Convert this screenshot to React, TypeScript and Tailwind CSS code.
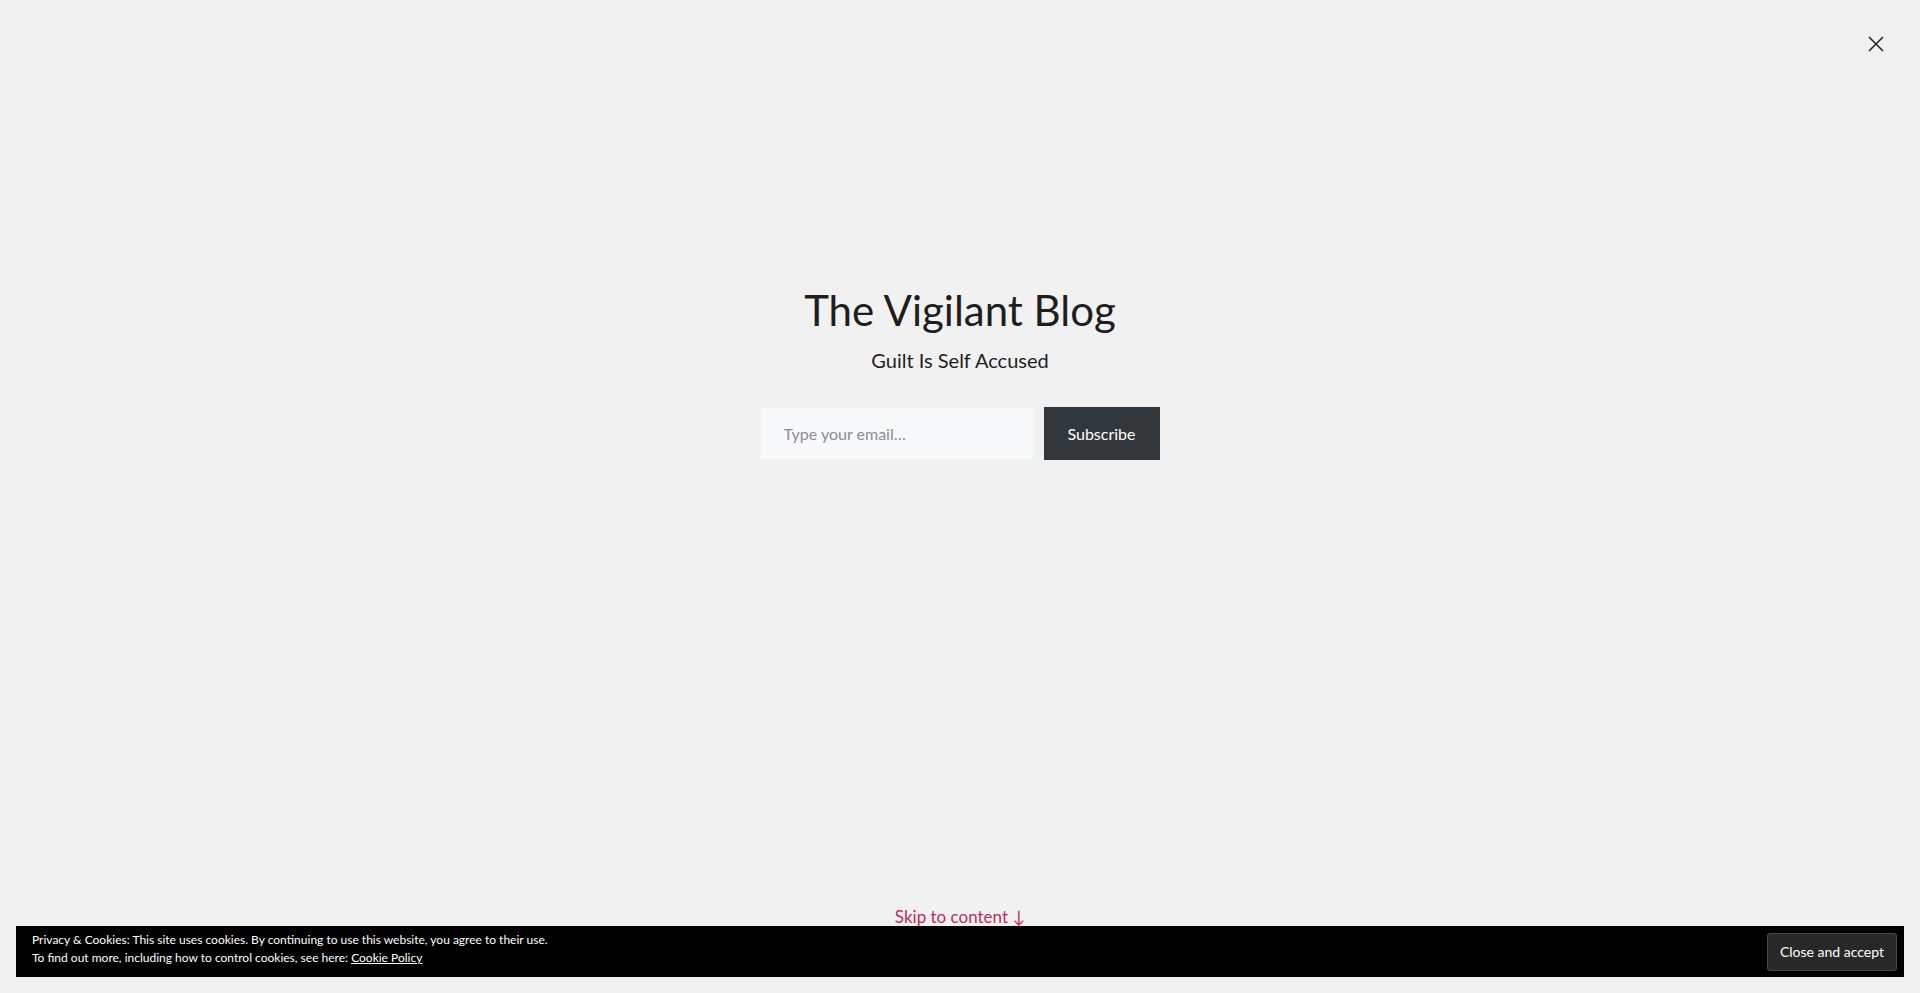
export default function App() {
  return (
    <div className="relative flex h-[993px] w-full flex-col items-center overflow-hidden bg-[#f1f1f1] font-['Lato',sans-serif] text-[#1e1e1e]">
      {/* close overlay */}
      <button className="absolute right-[36px] top-[36px] text-[#222]" aria-label="Close">
        <svg width="16" height="16" viewBox="0 0 16 16" fill="none" stroke="currentColor" strokeWidth="1.5">
          <path d="M1 1L15 15M15 1L1 15" />
        </svg>
      </button>

      <div className="flex flex-col items-center pt-[285px]">
        <h1 className="text-[42px] font-normal leading-[1.2] text-[#1e1e1e]">The Vigilant Blog</h1>
        <p className="mt-[13px] text-[20px] leading-[1.2] text-[#1e1e1e]">Guilt Is Self Accused</p>

        <form className="mt-[35px] flex items-center gap-[11px]">
          <input
            type="email"
            placeholder="Type your email…"
            className="h-[51px] w-[272px] bg-[#f7f8f9] px-[23px] text-[16px] text-[#1e1e1e] outline-none placeholder:text-[#8a8e93]"
          />
          <button
            type="button"
            className="h-[53px] w-[116px] bg-[#32373c] text-[16px] text-white"
          >
            Subscribe
          </button>
        </form>
      </div>

      <a href="#content" className="mb-[66px] mt-auto text-[17px] leading-[1.2] text-[#c42c5b]">
        Skip to content ↓
      </a>

      {/* cookie notice */}
      <div className="fixed bottom-4 left-4 right-4 flex h-[51px] items-center justify-between bg-black pl-4 pr-[7px] text-white">
        <div className="-mt-[5px] text-[12px] leading-[18px]">
          <div>Privacy &amp; Cookies: This site uses cookies. By continuing to use this website, you agree to their use.</div>
          <div>
            To find out more, including how to control cookies, see here:{" "}
            <a href="#" className="underline">Cookie Policy</a>
          </div>
        </div>
        <button className="h-[38px] rounded-[3px] border border-[#4a4a4a] bg-[#282828] px-[12px] text-[14px] text-white">
          Close and accept
        </button>
      </div>
    </div>
  );
}
